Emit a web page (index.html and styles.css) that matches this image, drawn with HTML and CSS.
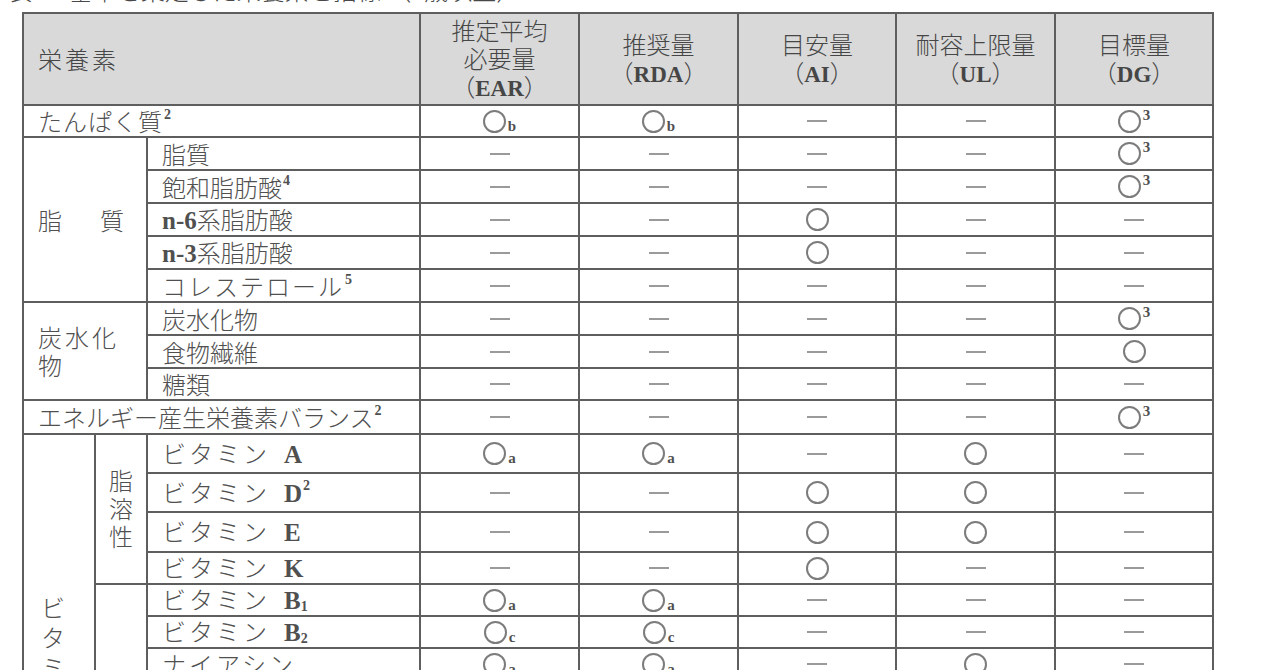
FILE: index.html
```html
<!DOCTYPE html>
<html lang="ja">
<head>
<meta charset="utf-8">
<title>基準を策定した栄養素と指標</title>
<link rel="stylesheet" href="styles.css">
</head>
<body>
<div class="page">
  <p class="caption">表1　基準を策定した栄養素と指標<span class="en cap-sup">1</span>（1歳以上）</p>
  <table class="dri">
    <colgroup>
      <col class="c-a"><col class="c-b"><col class="c-c">
      <col class="c-d"><col class="c-d"><col class="c-e"><col class="c-d"><col class="c-e">
    </colgroup>
    <thead>
      <tr class="rh">
        <th colspan="3" class="nut">栄養素</th>
        <th>推定平均<br>必要量<br><span class="hen">（<span class="en">EAR</span>）</span></th>
        <th>推奨量<br><span class="hen">（<span class="en">RDA</span>）</span></th>
        <th>目安量<br><span class="hen">（<span class="en">AI</span>）</span></th>
        <th>耐容上限量<br><span class="hen">（<span class="en">UL</span>）</span></th>
        <th>目標量<br><span class="hen">（<span class="en">DG</span>）</span></th>
      </tr>
    </thead>
    <tbody>
      <tr class="r32">
        <td colspan="3" class="lab"><span class="ls1">たんぱく質</span><span class="en up">2</span></td>
        <td class="v"><span class="mk"><i class="o"></i><b class="lo">b</b></span></td>
        <td class="v"><span class="mk"><i class="o"></i><b class="lo">b</b></span></td>
        <td class="v"><i class="d"></i></td>
        <td class="v"><i class="d"></i></td>
        <td class="v"><span class="mk"><i class="o"></i><b class="hi">3</b></span></td>
      </tr>

      <tr class="r33">
        <td colspan="2" rowspan="5" class="grp"><span class="wide">脂</span>質</td>
        <td class="lab">脂質</td>
        <td class="v"><i class="d"></i></td>
        <td class="v"><i class="d"></i></td>
        <td class="v"><i class="d"></i></td>
        <td class="v"><i class="d"></i></td>
        <td class="v"><span class="mk"><i class="o"></i><b class="hi">3</b></span></td>
      </tr>
      <tr class="r33">
        <td class="lab">飽和脂肪酸<span class="en up">4</span></td>
        <td class="v"><i class="d"></i></td>
        <td class="v"><i class="d"></i></td>
        <td class="v"><i class="d"></i></td>
        <td class="v"><i class="d"></i></td>
        <td class="v"><span class="mk"><i class="o"></i><b class="hi">3</b></span></td>
      </tr>
      <tr class="r33">
        <td class="lab"><span class="en nn">n-6</span>系脂肪酸</td>
        <td class="v"><i class="d"></i></td>
        <td class="v"><i class="d"></i></td>
        <td class="v"><span class="mk"><i class="o"></i></span></td>
        <td class="v"><i class="d"></i></td>
        <td class="v"><i class="d"></i></td>
      </tr>
      <tr class="r33">
        <td class="lab"><span class="en nn">n-3</span>系脂肪酸</td>
        <td class="v"><i class="d"></i></td>
        <td class="v"><i class="d"></i></td>
        <td class="v"><span class="mk"><i class="o"></i></span></td>
        <td class="v"><i class="d"></i></td>
        <td class="v"><i class="d"></i></td>
      </tr>
      <tr class="r33">
        <td class="lab"><span class="ls2">コレステロール</span><span class="en up">5</span></td>
        <td class="v"><i class="d"></i></td>
        <td class="v"><i class="d"></i></td>
        <td class="v"><i class="d"></i></td>
        <td class="v"><i class="d"></i></td>
        <td class="v"><i class="d"></i></td>
      </tr>

      <tr class="r33">
        <td colspan="2" rowspan="3" class="grp carb">炭水化<br>物</td>
        <td class="lab">炭水化物</td>
        <td class="v"><i class="d"></i></td>
        <td class="v"><i class="d"></i></td>
        <td class="v"><i class="d"></i></td>
        <td class="v"><i class="d"></i></td>
        <td class="v"><span class="mk"><i class="o"></i><b class="hi">3</b></span></td>
      </tr>
      <tr class="r33">
        <td class="lab">食物繊維</td>
        <td class="v"><i class="d"></i></td>
        <td class="v"><i class="d"></i></td>
        <td class="v"><i class="d"></i></td>
        <td class="v"><i class="d"></i></td>
        <td class="v"><span class="mk"><i class="o"></i></span></td>
      </tr>
      <tr class="r32">
        <td class="lab">糖類</td>
        <td class="v"><i class="d"></i></td>
        <td class="v"><i class="d"></i></td>
        <td class="v"><i class="d"></i></td>
        <td class="v"><i class="d"></i></td>
        <td class="v"><i class="d"></i></td>
      </tr>

      <tr class="r34">
        <td colspan="3" class="lab">エネルギー産生栄養素バランス<span class="en up">2</span></td>
        <td class="v"><i class="d"></i></td>
        <td class="v"><i class="d"></i></td>
        <td class="v"><i class="d"></i></td>
        <td class="v"><i class="d"></i></td>
        <td class="v"><span class="mk"><i class="o"></i><b class="hi">3</b></span></td>
      </tr>

      <tr class="r39">
        <td rowspan="13" class="vit"><span class="stack vt">ビ<br>タ<br>ミ<br>ン</span></td>
        <td rowspan="4" class="sub"><span class="stack fs">脂<br>溶<br>性</span></td>
        <td class="lab"><span class="ls3">ビタミン</span><span class="en vl">A</span></td>
        <td class="v"><span class="mk"><i class="o"></i><b class="lo">a</b></span></td>
        <td class="v"><span class="mk"><i class="o"></i><b class="lo">a</b></span></td>
        <td class="v"><i class="d"></i></td>
        <td class="v"><span class="mk"><i class="o"></i></span></td>
        <td class="v"><i class="d"></i></td>
      </tr>
      <tr class="r39">
        <td class="lab"><span class="ls3">ビタミン</span><span class="en vl">D</span><span class="en up">2</span></td>
        <td class="v"><i class="d"></i></td>
        <td class="v"><i class="d"></i></td>
        <td class="v"><span class="mk"><i class="o"></i></span></td>
        <td class="v"><span class="mk"><i class="o"></i></span></td>
        <td class="v"><i class="d"></i></td>
      </tr>
      <tr class="r40">
        <td class="lab"><span class="ls3">ビタミン</span><span class="en vl">E</span></td>
        <td class="v"><i class="d"></i></td>
        <td class="v"><i class="d"></i></td>
        <td class="v"><span class="mk"><i class="o"></i></span></td>
        <td class="v"><span class="mk"><i class="o"></i></span></td>
        <td class="v"><i class="d"></i></td>
      </tr>
      <tr class="r32">
        <td class="lab"><span class="ls3">ビタミン</span><span class="en vl">K</span></td>
        <td class="v"><i class="d"></i></td>
        <td class="v"><i class="d"></i></td>
        <td class="v"><span class="mk"><i class="o"></i></span></td>
        <td class="v"><i class="d"></i></td>
        <td class="v"><i class="d"></i></td>
      </tr>

      <tr class="r32">
        <td rowspan="9" class="sub"><span class="stack fs">水<br>溶<br>性</span></td>
        <td class="lab"><span class="ls3">ビタミン</span><span class="en vl">B</span><span class="en dn">1</span></td>
        <td class="v"><span class="mk"><i class="o"></i><b class="lo">a</b></span></td>
        <td class="v"><span class="mk"><i class="o"></i><b class="lo">a</b></span></td>
        <td class="v"><i class="d"></i></td>
        <td class="v"><i class="d"></i></td>
        <td class="v"><i class="d"></i></td>
      </tr>
      <tr class="r32">
        <td class="lab"><span class="ls3">ビタミン</span><span class="en vl">B</span><span class="en dn">2</span></td>
        <td class="v"><span class="mk"><i class="o"></i><b class="lo">c</b></span></td>
        <td class="v"><span class="mk"><i class="o"></i><b class="lo">c</b></span></td>
        <td class="v"><i class="d"></i></td>
        <td class="v"><i class="d"></i></td>
        <td class="v"><i class="d"></i></td>
      </tr>
      <tr class="r32">
        <td class="lab"><span class="ls3">ナイアシン</span></td>
        <td class="v"><span class="mk"><i class="o"></i><b class="lo">a</b></span></td>
        <td class="v"><span class="mk"><i class="o"></i><b class="lo">a</b></span></td>
        <td class="v"><i class="d"></i></td>
        <td class="v"><span class="mk"><i class="o"></i></span></td>
        <td class="v"><i class="d"></i></td>
      </tr>
      <tr class="r32">
        <td class="lab"><span class="ls3">ビタミン</span><span class="en vl">B</span><span class="en dn">6</span></td>
        <td class="v"><span class="mk"><i class="o"></i><b class="lo">b</b></span></td>
        <td class="v"><span class="mk"><i class="o"></i><b class="lo">b</b></span></td>
        <td class="v"><i class="d"></i></td>
        <td class="v"><span class="mk"><i class="o"></i></span></td>
        <td class="v"><i class="d"></i></td>
      </tr>
      <tr class="r32">
        <td class="lab"><span class="ls3">ビタミン</span><span class="en vl">B</span><span class="en dn">12</span></td>
        <td class="v"><span class="mk"><i class="o"></i><b class="lo">a</b></span></td>
        <td class="v"><span class="mk"><i class="o"></i><b class="lo">a</b></span></td>
        <td class="v"><i class="d"></i></td>
        <td class="v"><i class="d"></i></td>
        <td class="v"><i class="d"></i></td>
      </tr>
      <tr class="r32">
        <td class="lab">葉酸</td>
        <td class="v"><span class="mk"><i class="o"></i><b class="lo">a</b></span></td>
        <td class="v"><span class="mk"><i class="o"></i><b class="lo">a</b></span></td>
        <td class="v"><i class="d"></i></td>
        <td class="v"><span class="mk"><i class="o"></i><b class="hi">7</b></span></td>
        <td class="v"><i class="d"></i></td>
      </tr>
      <tr class="r32">
        <td class="lab"><span class="ls2">パントテン酸</span></td>
        <td class="v"><i class="d"></i></td>
        <td class="v"><i class="d"></i></td>
        <td class="v"><span class="mk"><i class="o"></i></span></td>
        <td class="v"><i class="d"></i></td>
        <td class="v"><i class="d"></i></td>
      </tr>
      <tr class="r32">
        <td class="lab"><span class="ls3">ビオチン</span></td>
        <td class="v"><i class="d"></i></td>
        <td class="v"><i class="d"></i></td>
        <td class="v"><span class="mk"><i class="o"></i></span></td>
        <td class="v"><i class="d"></i></td>
        <td class="v"><i class="d"></i></td>
      </tr>
      <tr class="r32">
        <td class="lab"><span class="ls3">ビタミン</span><span class="en vl">C</span></td>
        <td class="v"><span class="mk"><i class="o"></i><b class="lo">x</b></span></td>
        <td class="v"><span class="mk"><i class="o"></i><b class="lo">x</b></span></td>
        <td class="v"><i class="d"></i></td>
        <td class="v"><i class="d"></i></td>
        <td class="v"><i class="d"></i></td>
      </tr>
    </tbody>
  </table>
</div>
</body>
</html>
```

FILE: styles.css
```css
html, body {
  margin: 0;
  padding: 0;
  background: #ffffff;
}

body {
  font-family: "Noto Sans CJK JP", "Noto Sans CJK SC", sans-serif;
  font-weight: 300;
  font-size: 24px;
  color: #505050;
  overflow: hidden;
}

.page {
  padding-left: 22px;
}

.caption {
  margin: -22px 0 0 -14px;
  height: 24px;
  line-height: 24px;
  font-size: 24px;
  color: #484848;
  white-space: nowrap;
}

.cap-sup {
  font-size: 13px;
  vertical-align: top;
  line-height: 1;
}

.en {
  font-family: "Liberation Serif", "Times New Roman", serif;
  font-weight: bold;
}

.dri {
  margin-top: 10px;
  border-collapse: collapse;
  table-layout: fixed;
  width: 1192px;
  border: 2px solid #7a7a7a;
}

.c-a { width: 72px; }
.c-b { width: 52px; }
.c-c { width: 273px; }
.c-d { width: 159px; }
.c-e { width: 158px; }

.dri th,
.dri td {
  border: 2px solid #5e5e5e;
  padding: 0;
  box-sizing: border-box;
}

.dri th {
  background: #d9d9d9;
  font-weight: 300;
  line-height: 28px;
  text-align: center;
  vertical-align: middle;
  color: #464646;
}

.dri th.nut {
  text-align: left;
  padding-left: 14px;
  letter-spacing: 3px;
}

.hen {
  font-size: 24px;
}

.hen .en {
  font-size: 23px;
}

.rh { height: 92px; }
.r32 { height: 32px; }
.r33 { height: 33px; }
.r34 { height: 34px; }
.r39 { height: 39px; }
.r40 { height: 40px; }

.dri .lab {
  padding-left: 14px;
  text-align: left;
  vertical-align: middle;
  white-space: nowrap;
  line-height: 26px;
}

.dri .grp {
  padding-left: 14px;
  vertical-align: middle;
  text-align: left;
  line-height: 28px;
  white-space: nowrap;
}

.wide {
  margin-right: 38px;
}

.carb {
  letter-spacing: 3px;
}

.dri .vit,
.dri .sub {
  text-align: center;
  vertical-align: middle;
}

.stack {
  display: inline-block;
}

.vt {
  line-height: 30px;
  margin-left: -12px;
}

.fs {
  line-height: 28px;
}

.ls1 { letter-spacing: 1px; }
.ls2 { letter-spacing: 2px; }
.ls3 { letter-spacing: 3px; }

.up {
  font-size: 14px;
  vertical-align: top;
  line-height: 1;
  margin-left: 1px;
}

.dn {
  font-size: 14px;
  vertical-align: -2px;
  line-height: 1;
}

.nn {
  font-size: 25px;
}

.vl {
  font-size: 25px;
  margin-left: 14px;
}

.dri .v {
  text-align: center;
  vertical-align: middle;
  font-size: 0;
  line-height: 0;
}

.mk {
  display: inline-flex;
  height: 23px;
  vertical-align: middle;
}

.o {
  display: block;
  width: 19px;
  height: 19px;
  border: 2px solid #7c7c7c;
  border-radius: 50%;
}

.lo,
.hi {
  font-family: "Liberation Serif", "Times New Roman", serif;
  font-weight: bold;
  font-size: 15px;
  line-height: 1;
  color: #505050;
  margin-left: 2px;
}

.lo {
  align-self: flex-end;
  margin-bottom: -1px;
}

.hi {
  align-self: flex-start;
  margin-top: -2px;
}

.d {
  display: inline-block;
  width: 20px;
  height: 2px;
  background: #9a9a9a;
  vertical-align: middle;
}
```
